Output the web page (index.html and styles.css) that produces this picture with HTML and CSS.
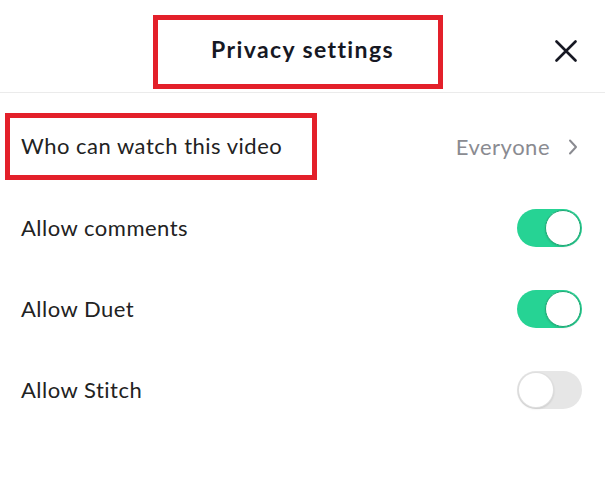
FILE: index.html
```html
<!DOCTYPE html>
<html lang="en">
<head>
    <meta charset="UTF-8">
    <meta name="viewport" content="width=device-width, initial-scale=1.0">
    <title>Privacy settings</title>
    <link rel="stylesheet" href="styles.css">
</head>
<body>
    <div class="sheet">
        <div class="header">
            <div class="title-box">
                <h1>Privacy settings</h1>
            </div>
            <button class="close" title="Close">
                <svg width="22" height="22" viewBox="0 0 22 22">
                    <path d="M1.5 1.5 L20.5 20.5 M20.5 1.5 L1.5 20.5" stroke="#161823" stroke-width="2.6" stroke-linecap="round" fill="none"/>
                </svg>
            </button>
        </div>
        <div class="list">
            <div class="row">
                <span class="label label-boxed">Who can watch this video</span>
                <span class="value">
                    Everyone
                    <svg class="chevron" width="10" height="16" viewBox="0 0 10 16">
                        <path d="M2 1.5 L8 8 L2 14.5" stroke="#8a8b91" stroke-width="2" stroke-linecap="round" stroke-linejoin="round" fill="none"/>
                    </svg>
                </span>
            </div>
            <div class="row">
                <span class="label">Allow comments</span>
                <span class="toggle on"><span class="knob"></span></span>
            </div>
            <div class="row">
                <span class="label">Allow Duet</span>
                <span class="toggle on"><span class="knob"></span></span>
            </div>
            <div class="row">
                <span class="label">Allow Stitch</span>
                <span class="toggle"><span class="knob"></span></span>
            </div>
        </div>
    </div>
</body>
</html>
```

FILE: styles.css
```css
html, body {
    margin: 0;
    padding: 0;
    background: #fff;
    font-family: Lato, "Open Sans", sans-serif;
    color: #161823;
}
.sheet {
    width: 605px;
    height: 487px;
}
.header {
    display: grid;
    grid-template-columns: 1fr auto 1fr;
    align-items: center;
    padding: 15px 0 3px;
    border-bottom: 1px solid #ebebeb;
}
.title-box {
    grid-column: 2;
    box-sizing: border-box;
    width: 290px;
    height: 74px;
    margin-right: 9px;
    border: 5px solid #e3202a;
    display: flex;
    align-items: center;
    justify-content: center;
    padding: 0 0 6px 9px;
}
.title-box h1 {
    margin: 0;
    font-size: 23px;
    font-weight: 700;
    letter-spacing: 1.4px;
    color: #161823;
}
.close {
    grid-column: 3;
    justify-self: end;
    margin-right: 28px;
    margin-top: -3px;
    border: none;
    background: none;
    padding: 0;
    width: 22px;
    height: 22px;
    display: flex;
    cursor: pointer;
}
.list {
    padding-top: 13px;
}
.row {
    height: 81px;
    display: flex;
    align-items: center;
    justify-content: space-between;
    padding: 0 23px 0 21px;
}
.label {
    font-size: 22px;
    letter-spacing: 0.5px;
    color: #222;
}
.label-boxed {
    box-sizing: border-box;
    height: 67px;
    width: 312px;
    margin-left: -16px;
    padding: 0 0 2px 11px;
    border: 5px solid #e3202a;
    display: flex;
    align-items: center;
}
.value {
    display: flex;
    align-items: center;
    gap: 18px;
    font-size: 22px;
    letter-spacing: 0.5px;
    color: #8a8b91;
    margin-right: 4px;
}
.toggle {
    box-sizing: border-box;
    width: 65px;
    height: 38px;
    border-radius: 19px;
    background: #e6e6e6;
    display: flex;
    align-items: center;
    padding: 1px;
}
.toggle.on {
    background: #26d394;
    justify-content: flex-end;
}
.knob {
    box-sizing: border-box;
    width: 36px;
    height: 36px;
    border-radius: 50%;
    background: #fff;
    border: 1px solid rgba(0, 0, 0, 0.12);
    box-shadow: 0 1px 2px rgba(0, 0, 0, 0.12);
}
.toggle.on .knob {
    border-color: #1da874;
}
```
